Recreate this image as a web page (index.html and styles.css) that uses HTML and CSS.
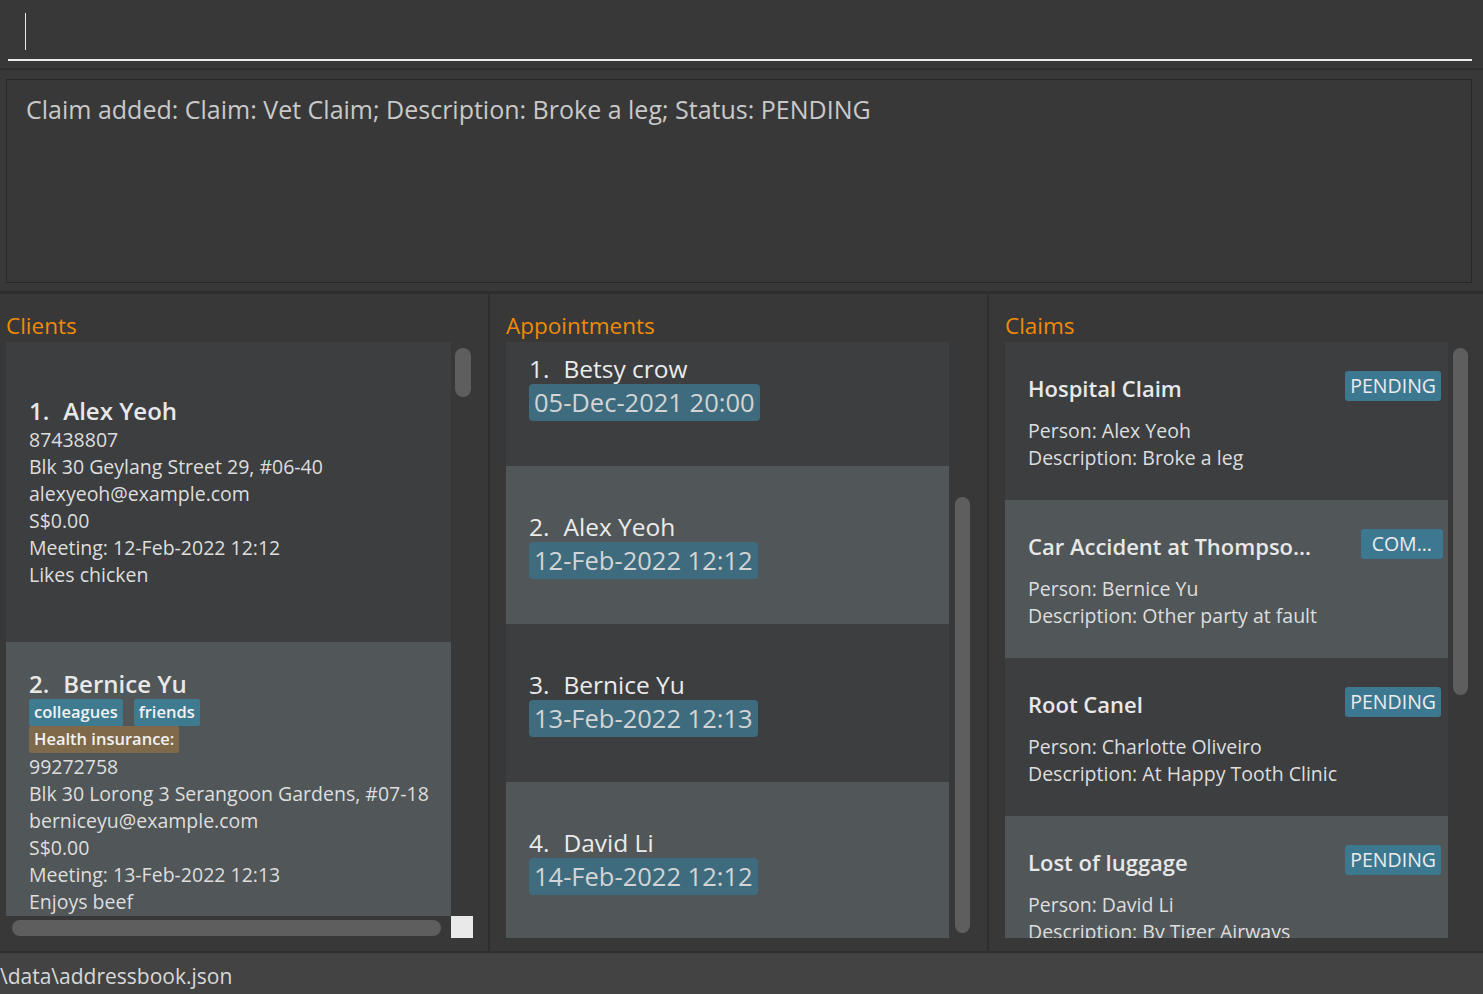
FILE: index.html
```html
<!DOCTYPE html>
<html lang="en">
<head>
<meta charset="utf-8">
<title>Address Book</title>
<link rel="stylesheet" href="styles.css">
</head>
<body>
<div class="app">
  <div class="command">
    <div class="command-field"><span class="caret"></span></div>
  </div>
  <div class="result-area">
    <div class="result-box">Claim added: Claim: Vet Claim; Description: Broke a leg; Status: PENDING</div>
  </div>
  <div class="panels">
    <section class="panel panel-clients">
      <h2 class="panel-title">Clients</h2>
      <div class="list-row list-row-clients">
        <div class="list list-clients">
          <div class="cell person even">
            <div class="name"><span class="idx">1.</span>Alex Yeoh</div>
            <div class="field">87438807</div>
            <div class="field">Blk 30 Geylang Street 29, #06-40</div>
            <div class="field">alexyeoh@example.com</div>
            <div class="field">S$0.00</div>
            <div class="field">Meeting: 12-Feb-2022 12:12</div>
            <div class="field">Likes chicken</div>
          </div>
          <div class="cell person odd">
            <div class="name"><span class="idx">2.</span>Bernice Yu</div>
            <div class="tags"><span class="tag">colleagues</span><span class="tag">friends</span></div>
            <div class="tags"><span class="tag tag-info">Health insurance:</span></div>
            <div class="field">99272758</div>
            <div class="field">Blk 30 Lorong 3 Serangoon Gardens, #07-18</div>
            <div class="field">berniceyu@example.com</div>
            <div class="field">S$0.00</div>
            <div class="field">Meeting: 13-Feb-2022 12:13</div>
            <div class="field">Enjoys beef</div>
          </div>
        </div>
        <div class="vscroll vscroll-clients"><div class="thumb"></div></div>
      </div>
      <div class="hscroll-row">
        <div class="hscroll"><div class="hthumb"></div></div>
        <div class="corner"></div>
      </div>
    </section>
    <div class="vsep"></div>
    <section class="panel panel-apps">
      <h2 class="panel-title">Appointments</h2>
      <div class="list-row list-row-tall">
        <div class="list list-apps">
          <div class="cell appt even first-scrolled">
            <div class="appt-name"><span class="idx">1.</span>Betsy crow</div>
            <div class="chip">05-Dec-2021 20:00</div>
          </div>
          <div class="cell appt odd">
            <div class="appt-name"><span class="idx">2.</span>Alex Yeoh</div>
            <div class="chip">12-Feb-2022 12:12</div>
          </div>
          <div class="cell appt even">
            <div class="appt-name"><span class="idx">3.</span>Bernice Yu</div>
            <div class="chip">13-Feb-2022 12:13</div>
          </div>
          <div class="cell appt odd">
            <div class="appt-name"><span class="idx">4.</span>David Li</div>
            <div class="chip">14-Feb-2022 12:12</div>
          </div>
        </div>
        <div class="vscroll vscroll-apps"><div class="thumb"></div></div>
      </div>
    </section>
    <div class="vsep"></div>
    <section class="panel panel-claims">
      <h2 class="panel-title">Claims</h2>
      <div class="list-row list-row-tall">
        <div class="list list-claims">
          <div class="cell claim even">
            <div class="claim-head"><span class="claim-title">Hospital Claim</span><span class="badge">PENDING</span></div>
            <div class="field">Person: Alex Yeoh</div>
            <div class="field">Description: Broke a leg</div>
          </div>
          <div class="cell claim odd">
            <div class="claim-head"><span class="claim-title">Car Accident at Thompso...</span><span class="badge badge-wide">COM...</span></div>
            <div class="field">Person: Bernice Yu</div>
            <div class="field">Description: Other party at fault</div>
          </div>
          <div class="cell claim even">
            <div class="claim-head"><span class="claim-title">Root Canel</span><span class="badge">PENDING</span></div>
            <div class="field">Person: Charlotte Oliveiro</div>
            <div class="field">Description: At Happy Tooth Clinic</div>
          </div>
          <div class="cell claim odd">
            <div class="claim-head"><span class="claim-title">Lost of luggage</span><span class="badge">PENDING</span></div>
            <div class="field">Person: David Li</div>
            <div class="field">Description: By Tiger Airways</div>
          </div>
        </div>
        <div class="vscroll vscroll-claims"><div class="thumb"></div></div>
      </div>
    </section>
  </div>
  <div class="status">\data\addressbook.json</div>
</div>
</body>
</html>
```

FILE: styles.css
```css
* { box-sizing: border-box; }
html, body { margin: 0; padding: 0; }
body {
  background: #383838;
  font-family: "Open Sans", "Noto Sans", sans-serif;
  color: #e0e0e0;
  width: 1483px;
  height: 994px;
  overflow: hidden;
}
.app { display: flex; flex-direction: column; height: 994px; }

/* command box */
.command {
  height: 70px;
  padding: 0 11px 0 8px;
  border-bottom: 2px solid #2f2f2f;
  flex-shrink: 0;
}
.command-field {
  height: 61px;
  border-bottom: 2px solid #ececec;
  padding: 13px 0 0 17px;
}
.caret { display: block; width: 1px; height: 37px; background: #e8e8e8; }

/* result display */
.result-area {
  height: 224px;
  padding: 9px 11px 0 6px;
  border-bottom: 3px solid #2e2e2e;
  flex-shrink: 0;
}
.result-box {
  height: 204px;
  border: 1px solid #272727;
  padding: 13px 19px;
  font-size: 25px;
  line-height: 32px;
  color: #c9c9c9;
  white-space: nowrap;
}

/* panels */
.panels {
  height: 659px;
  display: flex;
  border-bottom: 2px solid #2f2f2f;
  flex-shrink: 0;
}
.vsep { width: 2px; background: #2e2e2e; flex-shrink: 0; }
.panel { padding-top: 16px; display: flex; flex-direction: column; flex-shrink: 0; }
.panel-clients { width: 488px; padding-left: 6px; }
.panel-apps { width: 497px; padding-left: 16px; }
.panel-claims { flex: 1; padding-left: 16px; }
.panel-title {
  margin: 0;
  height: 32px;
  font-size: 22.5px;
  font-weight: 400;
  line-height: 32px;
  color: #ef8a07;
  white-space: nowrap;
}

.list-row { display: flex; }
.list-row-clients { height: 574px; }
.list-row-tall { height: 596px; }
.list { overflow: hidden; display: flex; flex-direction: column; }
.list-clients { width: 445px; }
.list-apps, .list-claims { width: 443px; }

.vscroll { flex-shrink: 0; }
.vscroll-clients { width: 22px; padding: 6px 0 0 4px; }
.vscroll-clients .thumb { width: 16px; height: 49px; }
.vscroll-apps { width: 24px; padding: 155px 0 0 6px; }
.vscroll-apps .thumb { width: 15px; height: 436px; }
.vscroll-claims { width: 24px; padding: 6px 0 0 5px; }
.vscroll-claims .thumb { width: 15px; height: 347px; }
.thumb { background: #5e5e5e; border-radius: 8px; }

.hscroll-row { display: flex; height: 22px; }
.hscroll { width: 445px; padding: 4px 10px 0 6px; }
.hthumb { height: 16px; background: #5e5e5e; border-radius: 8px; }
.corner { width: 22px; height: 22px; background: #e9e9e9; }

/* cells */
.cell {
  display: flex;
  flex-direction: column;
  justify-content: center;
  padding-left: 23px;
  flex-shrink: 0;
}
.even { background: #3c3e40; }
.odd { background: #515658; }
.person { height: 300px; }
.appt, .claim { height: 158px; }
.first-scrolled { margin-top: -34px; }

.idx { display: inline-block; margin-right: 14px; }
.name {
  font-size: 24px;
  font-weight: 600;
  line-height: 30px;
  color: #e8e8e8;
  white-space: nowrap;
}
.field {
  font-size: 19.5px;
  line-height: 27px;
  color: #dedede;
  white-space: nowrap;
}
.tags { display: flex; gap: 11px; }
.tag {
  height: 27px;
  padding: 0 5px;
  font-size: 16.5px;
  font-weight: 600;
  line-height: 26px;
  color: #f2f2f2;
  background: #3e7b91;
  border-radius: 2px;
  white-space: nowrap;
}
.tag-info { background: #7e6a4a; }

.appt-name {
  font-size: 24.5px;
  font-weight: 500;
  line-height: 31px;
  color: #ebebeb;
  white-space: nowrap;
}
.chip {
  align-self: flex-start;
  height: 37px;
  padding: 0 5px;
  font-size: 25.5px;
  line-height: 37px;
  color: #d2d4d5;
  background: #3e6c7e;
  border-radius: 4px;
  white-space: nowrap;
}

.claim-head {
  display: flex;
  justify-content: space-between;
  align-items: center;
  height: 30px;
  margin-bottom: 16px;
  padding-right: 7px;
}
.claim-title {
  font-size: 22px;
  font-weight: 600;
  color: #e8e8e8;
  padding-top: 3px;
  white-space: nowrap;
}
.badge {
  height: 30px;
  padding: 0 5px;
  font-size: 19.5px;
  font-weight: 500;
  line-height: 30px;
  color: #ececec;
  background: #3d7891;
  border-radius: 3px;
  white-space: nowrap;
}
.badge-wide { padding: 0 11px; margin-right: -2px; }

/* status bar */
.status {
  flex: 1;
  background: #434343;
  padding-top: 6px;
  font-size: 21px;
  line-height: 35px;
  color: #d8d8d8;
  white-space: nowrap;
}
```
